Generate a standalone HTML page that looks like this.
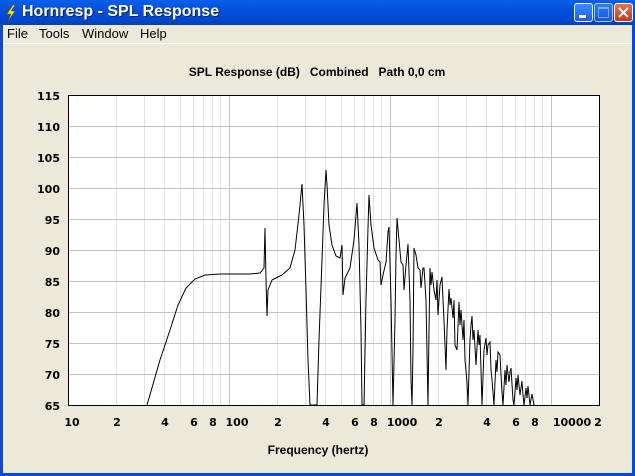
<!DOCTYPE html>
<html><head><meta charset="utf-8"><style>
body{margin:0;width:635px;height:476px;overflow:hidden;background:#ece9d8;font-family:"Liberation Sans",sans-serif;position:relative}
.tb{position:absolute;left:0;top:0;width:635px;height:25px;background:linear-gradient(#0a5fe8,#0250dc 40%,#0048d0 80%,#0a3fb0);}
.tt{position:absolute;left:22px;top:3px;color:#fff;font-weight:bold;font-size:16px;text-shadow:1px 1px #0a2060}
.bt{position:absolute;top:3px;width:19px;height:19px;border:1px solid #fff;border-radius:3px;background:linear-gradient(#3c8cff,#1a5ee8);box-sizing:border-box}
.menu{position:absolute;top:25px;left:0;width:635px;height:18px;font-size:13px;color:#000}
.menu span{position:absolute;top:1px}
.bl{position:absolute;left:0;top:25px;width:3px;height:451px;background:#0b4ad8}
.br{position:absolute;right:0;top:25px;width:3px;height:451px;background:#0b4ad8}
.bb{position:absolute;left:0;bottom:0;width:635px;height:3px;background:#0b4ad8}
</style></head><body>
<div class="tb"></div>
<svg style="position:absolute;left:5px;top:5px" width="12" height="16"><path d="M8 0 L2 9 L6 9 L3 16 L10 6 L6 6 L10 0Z" fill="#ffe000" stroke="#806000" stroke-width=".5"/></svg>
<div class="tt">Hornresp - SPL Response</div>
<div class="bt" style="left:574px"><div style="position:absolute;left:4px;top:11px;width:7px;height:3px;background:#fff"></div></div>
<div class="bt" style="left:594px;opacity:.7"><div style="position:absolute;left:3px;top:3px;width:11px;height:11px;border:1px solid #bcd;border-top-width:2px;box-sizing:border-box"></div></div>
<div class="bt" style="left:614px;background:linear-gradient(#e87050,#c83818)"><svg width="17" height="17"><path d="M4 4L13 13M13 4L4 13" stroke="#fff" stroke-width="2"/></svg></div>
<div class="menu"><span style="left:7px">File</span><span style="left:39px">Tools</span><span style="left:82px">Window</span><span style="left:140px">Help</span></div>
<div style="position:absolute;left:3px;top:43px;width:629px;height:1px;background:#fff"></div>
<div class="bl"></div><div class="br"></div><div class="bb"></div>
<svg style="position:absolute;left:0;top:0" width="635" height="476" font-family="Liberation Sans,sans-serif">
<text x="317" y="76" font-size="12" font-weight="bold" text-anchor="middle" style="white-space:pre">SPL Response (dB)   Combined   Path 0,0 cm</text>
<rect x="68" y="95" width="532" height="310" fill="#fff"/>
<g stroke="#e2e2e2" stroke-width="1">
<path d="M116.5 95V405M144.5 95V405M164.5 95V405M180.5 95V405M193.5 95V405M203.5 95V405M212.5 95V405M220.5 95V405M277.5 95V405M305.5 95V405M325.5 95V405M341.5 95V405M354.5 95V405M364.5 95V405M373.5 95V405M381.5 95V405M438.5 95V405M466.5 95V405M486.5 95V405M502.5 95V405M515.5 95V405M525.5 95V405M534.5 95V405M542.5 95V405M599.5 95V405"/>
</g>
<g stroke="#c4c4c4" stroke-width="1">
<path d="M229.5 95V405M390.5 95V405M551.5 95V405M68 126.5H600M68 157.5H600M68 188.5H600M68 219.5H600M68 250.5H600M68 281.5H600M68 312.5H600M68 343.5H600M68 374.5H600"/>
</g>
<path fill="none" stroke="#000" stroke-width="1" d="M147 405 L160 360 L170 330 L178 305 L186 288 L195 279 L205 275 L220 274 L250 274 L260 273 L264 268 L265 228 L266 280 L267 316 L268 290 L272 280 L282 275 L290 268 L295 250 L299 215 L302 184 L304 225 L306 290 L308 360 L310 405 L317 405 L319 340 L322 260 L324 205 L326 170 L327 185 L329 225 L332 245 L336 256 L340 258 L342 245 L343 295 L345 278 L350 268 L354 240 L357 203 L359 245 L361 330 L362 405 L364 405 L366 300 L368 228 L369 195 L371 225 L374 248 L378 260 L380 262 L381 285 L383 275 L386 262 L388 232 L389 227 L391 300 L393 405 L395 320 L396 255 L397 218 L399 240 L401 262 L403 265 L404 290 L406 265 L408 244 L410 300 L411 380 L412 405 L413 350 L414 248 L416 255 L418 268 L420 270 L421 288 L423 268 L424 268 L426 300 L428 405 L429 330 L430 268 L431 285 L432 272 L434 290 L436 300 L437 280 L438 315 L440 285 L442 277 L443 300 L444 320 L446 370 L447 330 L449 289 L450 305 L451 298 L453 318 L454 300 L455 345 L457 350 L459 302 L460 325 L461 310 L463 340 L464 320 L465 360 L467 382 L468 405 L470 340 L471 325 L472 316 L473 340 L474 330 L476 365 L478 330 L479 345 L480 335 L482 405 L484 350 L486 338 L487 355 L488 345 L490 342 L491 370 L492 380 L494 405 L496 360 L497 372 L498 352 L500 355 L501 375 L502 392 L503 405 L505 370 L506 385 L507 365 L509 382 L510 372 L511 368 L513 400 L514 405 L516 378 L517 390 L518 375 L520 395 L522 381 L523 395 L524 405 L526 388 L527 398 L528 386 L530 405 L532 394 L534 405"/>
<rect x="68.5" y="95.5" width="531" height="310" fill="none" stroke="#000"/>
<g font-family="DejaVu Sans,sans-serif" font-size="11" font-weight="bold" text-anchor="end">
<text x="60" y="100">115</text><text x="60" y="131">110</text><text x="60" y="162">105</text><text x="60" y="193">100</text><text x="60" y="224">95</text><text x="60" y="255">90</text><text x="60" y="286">85</text><text x="60" y="317">80</text><text x="60" y="348">75</text><text x="60" y="379">70</text><text x="60" y="410">65</text>
</g>
<g font-family="DejaVu Sans,sans-serif" font-size="11" font-weight="bold" text-anchor="middle">
<text x="72" y="426">10</text><text x="117" y="426">2</text><text x="165" y="426">4</text><text x="194" y="426">6</text><text x="213" y="426">8</text><text x="237" y="426">100</text><text x="278" y="426">2</text><text x="326" y="426">4</text><text x="355" y="426">6</text><text x="374" y="426">8</text><text x="402" y="426">1000</text><text x="439" y="426">2</text><text x="487" y="426">4</text><text x="516" y="426">6</text><text x="535" y="426">8</text><text x="572" y="426">10000</text><text x="598" y="426">2</text>
</g>
<text x="318" y="454" font-size="12" font-weight="bold" text-anchor="middle">Frequency (hertz)</text>
</svg>
</body></html>
